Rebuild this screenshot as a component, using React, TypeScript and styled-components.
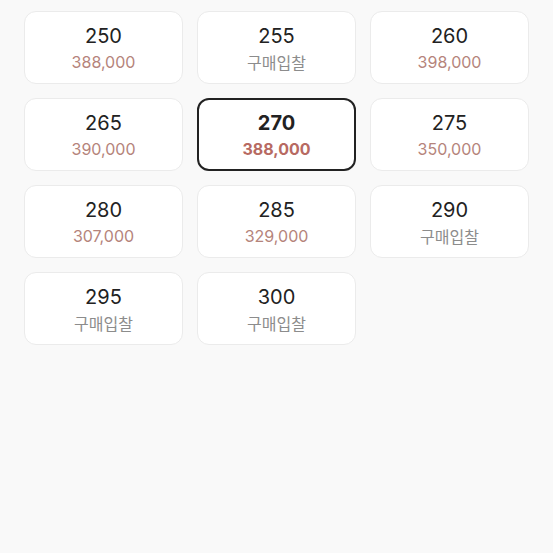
import React from 'react'
import styled, { createGlobalStyle } from 'styled-components'

const GlobalStyle = createGlobalStyle`
  html, body {
    margin: 0;
    padding: 0;
    background: #f9f9f9;
    font-family: Inter, "Noto Sans CJK KR", sans-serif;
  }
`

const Grid = styled.div`
  display: grid;
  grid-template-columns: repeat(3, 159px);
  grid-auto-rows: 73px;
  column-gap: 14px;
  row-gap: 14px;
  padding: 11px 24px;
`

const SizeCard = styled.button<{ $active?: boolean }>`
  display: flex;
  flex-direction: column;
  align-items: center;
  justify-content: center;
  gap: 2px;
  box-sizing: border-box;
  background: #fff;
  border: ${p => (p.$active ? '2px solid #222' : '1px solid #ebebeb')};
  border-radius: 12px;
  padding: 1px 0 0;
  font-family: inherit;
  cursor: pointer;
`

const SizeText = styled.span<{ $active?: boolean }>`
  font-size: 20px;
  line-height: 26px;
  color: #222;
  font-weight: ${p => (p.$active ? 700 : 400)};
`

const PriceText = styled.span<{ $active?: boolean }>`
  font-size: 16px;
  line-height: 22px;
  color: ${p => (p.$active ? '#b76a62' : '#b5847b')};
  font-weight: ${p => (p.$active ? 700 : 400)};
`

const EmptyText = styled.span`
  font-family: "Noto Sans CJK KR", sans-serif;
  font-size: 16px;
  line-height: 22px;
  color: #8c8c8c;
`

const sizes: { size: number; price: string | null }[] = [
  { size: 250, price: '388,000' },
  { size: 255, price: null },
  { size: 260, price: '398,000' },
  { size: 265, price: '390,000' },
  { size: 270, price: '388,000' },
  { size: 275, price: '350,000' },
  { size: 280, price: '307,000' },
  { size: 285, price: '329,000' },
  { size: 290, price: null },
  { size: 295, price: null },
  { size: 300, price: null },
]

export default function App() {
  const selected = 270
  return (
    <>
      <GlobalStyle />
      <Grid>
        {sizes.map(s => {
          const active = s.size === selected
          return (
            <SizeCard key={s.size} $active={active}>
              <SizeText $active={active}>{s.size}</SizeText>
              {s.price ? (
                <PriceText $active={active}>{s.price}</PriceText>
              ) : (
                <EmptyText>구매입찰</EmptyText>
              )}
            </SizeCard>
          )
        })}
      </Grid>
    </>
  )
}
